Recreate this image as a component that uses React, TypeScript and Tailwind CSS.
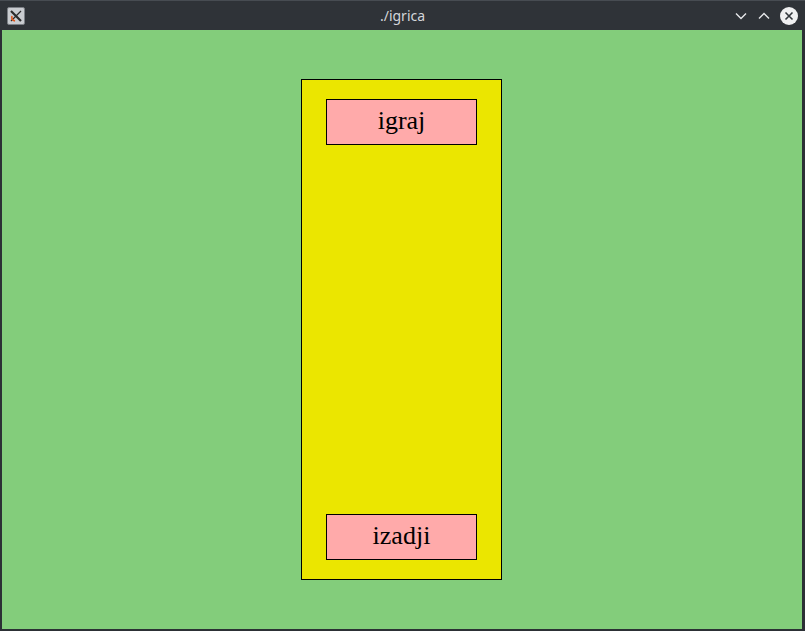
import * as React from "react";

function X11Icon() {
  return (
    <div className="w-[18px] h-[18px] rounded-[2px] bg-[#c9ccd0] border border-[#7c8086] flex items-center justify-center">
      <svg width="14" height="14" viewBox="0 0 14 14">
        <path d="M2 2 L12 12" stroke="#2b2b2b" strokeWidth="2.2" />
        <path d="M12 2 L2 12" stroke="#2b2b2b" strokeWidth="1.2" />
        <path d="M3 7 Q2 11 6 12" stroke="#e0561b" strokeWidth="1.6" fill="none" />
      </svg>
    </div>
  );
}

function TitleBar() {
  return (
    <div className="h-[30px] grid grid-cols-[1fr_auto_1fr] items-center bg-[#2f3338] border-t border-[#474c52]">
      <div className="pl-[7px]">
        <X11Icon />
      </div>
      <div className="text-center text-[14px] text-[#d3d6da] font-['Noto_Sans',sans-serif]">
        ./igrica
      </div>
      <div className="flex items-center justify-end gap-[9px] pr-[7px]">
        <svg width="14" height="14" viewBox="0 0 14 14">
          <path d="M2 4.5 L7 9.5 L12 4.5" stroke="#e6e8ea" strokeWidth="1.4" fill="none" />
        </svg>
        <svg width="14" height="14" viewBox="0 0 14 14">
          <path d="M2 9.5 L7 4.5 L12 9.5" stroke="#e6e8ea" strokeWidth="1.4" fill="none" />
        </svg>
        <svg width="18" height="18" viewBox="0 0 18 18">
          <circle cx="9" cy="9" r="9" fill="#eff0f1" />
          <path d="M5.5 5.5 L12.5 12.5 M12.5 5.5 L5.5 12.5" stroke="#31363b" strokeWidth="1.6" />
        </svg>
      </div>
    </div>
  );
}

function MenuButton({ label }: { label: string }) {
  return (
    <button className="w-[151px] h-[46px] border border-black bg-[#ffaaaa] flex items-center justify-center text-[26px] text-black font-['Liberation_Serif',serif] leading-none pb-[2px]">
      {label}
    </button>
  );
}

export default function App() {
  return (
    <div className="w-[805px] h-[631px] bg-[#2c3035] flex flex-col">
      <TitleBar />
      <div className="flex-1 pl-[2px] pr-[3px] pb-[2px] flex">
        <div className="flex-1 bg-[#83cd7b] flex pl-[299px] pt-[49px]">
          <div className="w-[201px] h-[501px] border border-black bg-[#ebe600] flex flex-col items-center justify-between py-[19px]">
            <MenuButton label="igraj" />
            <MenuButton label="izadji" />
          </div>
        </div>
      </div>
    </div>
  );
}
